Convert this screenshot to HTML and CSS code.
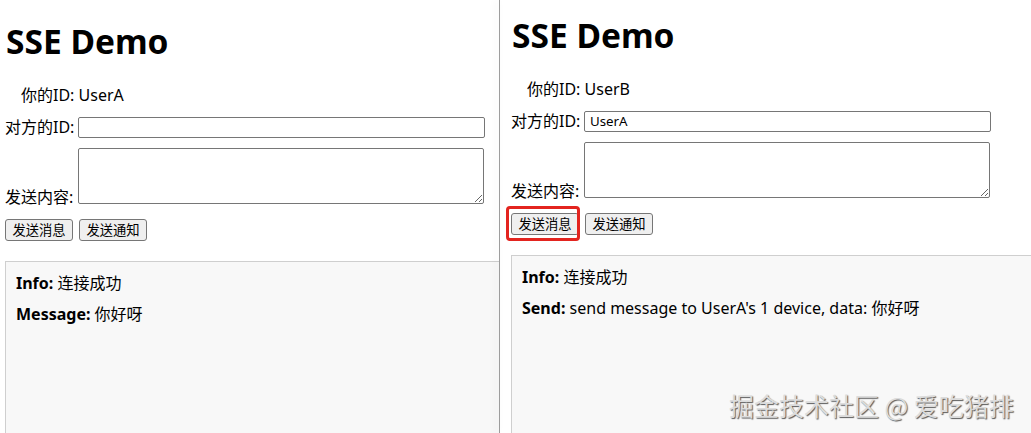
FILE: index.html
```html
<!DOCTYPE html>
<html lang="zh-CN">
<head>
<meta charset="utf-8">
<title>SSE Demo</title>
<link rel="stylesheet" href="styles.css">
</head>
<body>
<div class="screen">
  <section class="pane pane-a">
    <h1 class="title">SSE Demo</h1>
    <div class="me">你的ID: UserA</div>
    <div class="row row-center">
      <label class="lbl">对方的ID:</label>
      <input class="field" type="text" value="">
    </div>
    <div class="row row-end">
      <label class="lbl lbl-bottom">发送内容:</label>
      <textarea class="area"></textarea>
    </div>
    <div class="actions">
      <button class="btn">发送消息</button>
      <button class="btn">发送通知</button>
    </div>
    <div class="log">
      <p class="entry"><b>Info:</b> 连接成功</p>
      <p class="entry"><b>Message:</b> 你好呀</p>
    </div>
  </section>
  <div class="divider"></div>
  <section class="pane pane-b">
    <h1 class="title">SSE Demo</h1>
    <div class="me">你的ID: UserB</div>
    <div class="row row-center">
      <label class="lbl">对方的ID:</label>
      <input class="field" type="text" value="UserA">
    </div>
    <div class="row row-end">
      <label class="lbl lbl-bottom">发送内容:</label>
      <textarea class="area"></textarea>
    </div>
    <div class="actions">
      <button class="btn">发送消息</button>
      <button class="btn">发送通知</button>
    </div>
    <div class="log">
      <p class="entry"><b>Info:</b> 连接成功</p>
      <p class="entry"><b>Send:</b> send message to UserA's 1 device, data: 你好呀</p>
    </div>
    <div class="highlight"></div>
  </section>
  <div class="watermark">掘金技术社区 @ 爱吃猪排</div>
</div>
</body>
</html>
```

FILE: styles.css
```css
* { box-sizing: border-box; }
html, body { margin: 0; padding: 0; background: #fff; }
body {
  font-family: "Noto Sans", "Noto Sans CJK SC", sans-serif;
  font-size: 16px;
  color: #000;
}
.screen {
  position: relative;
  display: flex;
  width: 1031px;
  height: 433px;
  overflow: hidden;
}
.pane {
  position: relative;
  overflow: hidden;
  height: 433px;
  background: #fff;
}
.pane-a { flex: 0 0 499px; padding-left: 5px; }
.pane-b { flex: 1 1 auto; padding-left: 11px; }
.divider {
  flex: 0 0 1px;
  background: #9c9c9c;
  box-shadow: -3px 0 7px rgba(0,0,0,0.13);
  position: relative;
  z-index: 2;
}
.title {
  margin: 20px 0 0 1px;
  font-size: 33.5px;
  line-height: 42px;
  font-weight: 700;
}
.pane-b .title { margin-top: 14px; }
.me {
  margin-top: 22px;
  padding-left: 16px;
  line-height: 22px;
}
.row { display: flex; }
.row-center { align-items: center; margin-top: 10px; }
.row-end { align-items: flex-end; margin-top: 10px; }
.lbl { flex: 0 0 73px; line-height: 22px; white-space: nowrap; }
.lbl-bottom { margin-bottom: -3px; line-height: 20px; }
.field {
  width: 407px;
  height: 21px;
  margin: 0;
  border: 1px solid #767676;
  border-radius: 2px;
  padding: 1px 5px;
  font-family: "Noto Sans", "Noto Sans CJK SC", sans-serif;
  font-size: 13.3px;
  color: #000;
  background: #fff;
}
.area {
  width: 406px;
  height: 56px;
  margin: 0;
  border: 1px solid #767676;
  border-radius: 2px;
  resize: both;
  background: #fff;
}
.actions { display: flex; gap: 6px; margin-top: 15px; }
.btn {
  width: 68px;
  height: 22px;
  padding: 0;
  margin: 0;
  border: 1px solid #767676;
  border-radius: 3px;
  background: #efefef;
  font-family: "Noto Sans CJK SC", sans-serif;
  font-size: 13.3px;
  line-height: 18px;
  color: #000;
}
.log {
  margin-top: 20px;
  margin-right: -30px;
  height: 220px;
  background: #f8f8f8;
  border: 1px solid #cfcfcf;
  padding: 10px 10px;
}
.entry { margin: 0 0 8px; line-height: 23px; white-space: nowrap; }
.entry b { font-weight: 700; }
.highlight {
  position: absolute;
  left: 6px;
  top: 206px;
  width: 74px;
  height: 35px;
  border: 3px solid #e3241f;
  border-radius: 4px;
}
.watermark {
  position: absolute;
  left: 729px;
  top: 388px;
  font-family: "Noto Sans CJK SC", sans-serif;
  font-size: 25px;
  line-height: 34px;
  color: #dcdcdc;
  text-shadow: 1px 1px 1px #5a5a5a;
  white-space: nowrap;
  z-index: 3;
}
```
